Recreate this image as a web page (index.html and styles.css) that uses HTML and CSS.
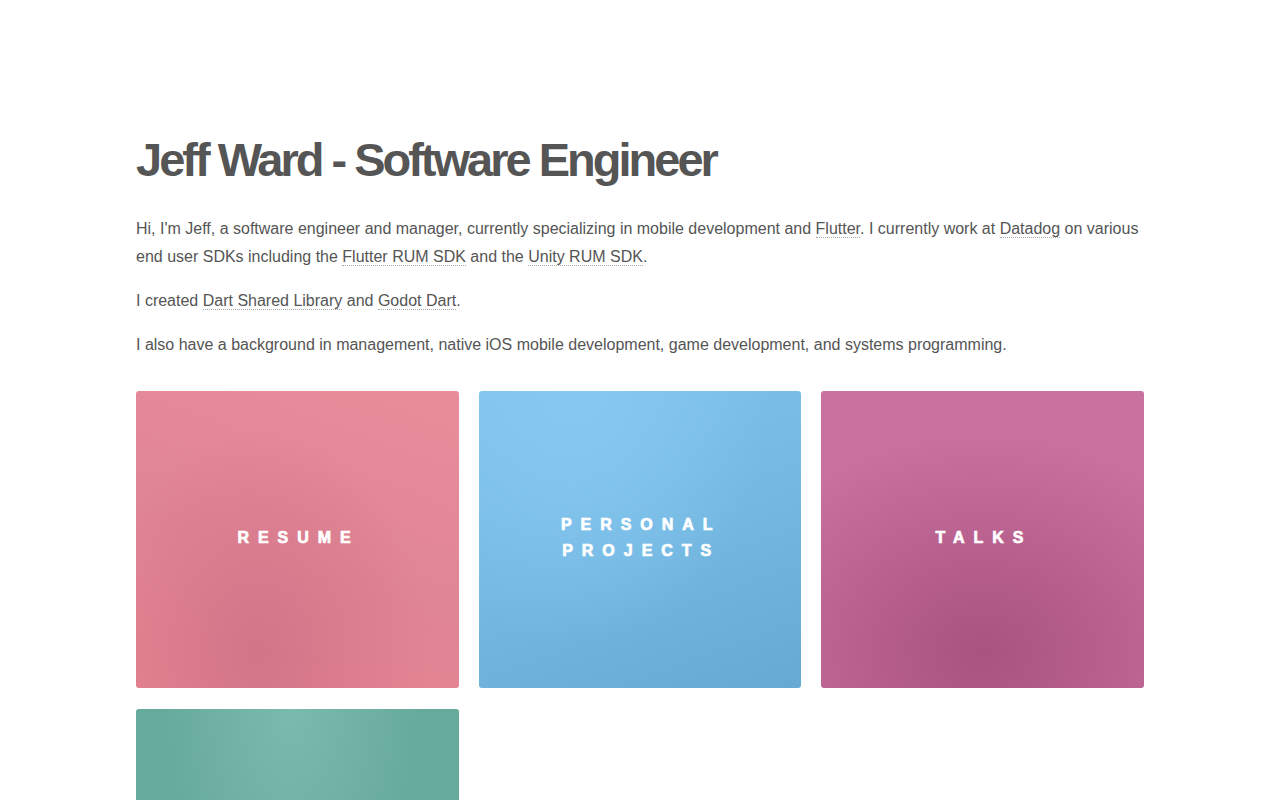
FILE: index.html
```html
<!DOCTYPE html>
<html lang="en">
<head>
  <meta charset="UTF-8">
  <meta name="viewport" content="width=device-width, initial-scale=1.0">
  <title>Jeff Ward - Software Engineer</title>
  <link rel="stylesheet" href="styles.css">
</head>
<body>
  <main class="page">
    <h1>Jeff Ward - Software Engineer</h1>

    <p>Hi, I'm Jeff, a software engineer and manager, currently specializing in mobile development and <a href="#">Flutter</a>. I currently work at <a href="#">Datadog</a> on various end user SDKs including the <a href="#">Flutter RUM SDK</a> and the <a href="#">Unity RUM SDK</a>.</p>
    <p>I created <a href="#">Dart Shared Library</a> and <a href="#">Godot Dart</a>.</p>
    <p>I also have a background in management, native iOS mobile development, game development, and systems programming.</p>

    <div class="tiles">
      <a class="tile tile-resume" href="#"><span>Resume</span></a>
      <a class="tile tile-projects" href="#"><span>Personal<br>Projects</span></a>
      <a class="tile tile-talks" href="#"><span>Talks</span></a>
      <a class="tile tile-blog" href="#"><span>Blog</span></a>
    </div>
  </main>
</body>
</html>
```

FILE: styles.css
```css
body {
  margin: 0;
  font-family: 'Liberation Sans', Arial, sans-serif;
  background: #fff;
  color: #555;
}
.page {
  width: 1008px;
  margin: 0 auto;
  padding-top: 132px;
}
h1 {
  font-size: 47px;
  font-weight: bold;
  color: #555;
  margin: 0 0 28px;
  letter-spacing: -3px;
}
p {
  font-size: 16px;
  line-height: 28px;
  margin: 0 0 16px;
}
p a {
  color: #555;
  text-decoration: none;
  border-bottom: 1px dotted #aaa;
}
.tiles {
  display: grid;
  grid-template-columns: repeat(3, 1fr);
  gap: 21px 20px;
  margin-top: 32px;
}
.tile {
  height: 297px;
  border-radius: 3px;
  display: flex;
  align-items: center;
  justify-content: center;
  text-align: center;
  text-decoration: none;
  color: #fff;
  font-size: 16px;
  font-weight: bold;
  line-height: 26px;
  letter-spacing: 0.56em;
  text-transform: uppercase;
  -webkit-text-stroke: 0.7px #fff;
}
.tile span {
  margin: 0 -0.15em 3px 0;
}
.tile-resume {
  background:
    radial-gradient(ellipse at 38% 88%, #d27589 0%, rgba(210, 117, 137, 0) 60%),
    linear-gradient(200deg, #e98d9b 0%, #e08595 55%, #e6838f 100%);
}
.tile-projects {
  background:
    radial-gradient(ellipse at 30% 0%, #86c8f0 0%, rgba(134, 200, 240, 0) 60%),
    linear-gradient(160deg, #80c3ed 0%, #75b9e3 50%, #66a9d2 100%);
}
.tile-talks {
  background:
    radial-gradient(ellipse 85% 75% at 50% 88%, #a85380 0%, #b45d8a 35%, rgba(190, 100, 146, 0) 100%),
    #c972a0;
}
.tile-blog {
  background:
    radial-gradient(ellipse at 48% 0%, #7bbbaf 0%, rgba(123, 187, 175, 0) 55%),
    #66a99d;
}
```
